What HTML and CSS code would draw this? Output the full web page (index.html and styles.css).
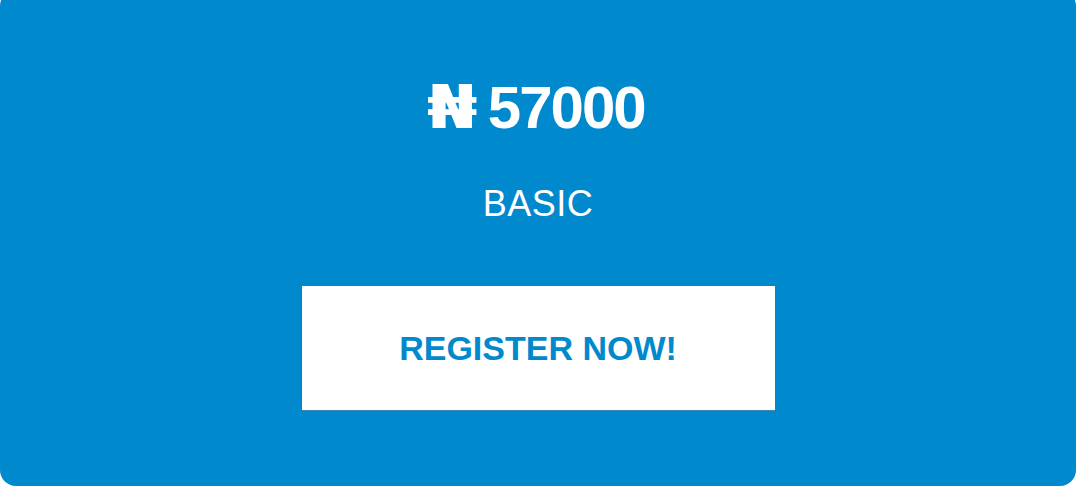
FILE: index.html
```html
<!DOCTYPE html>
<html>
<head>
<meta charset="utf-8">
<link rel="stylesheet" href="styles.css">
</head>
<body>
<div class="card">
  <div class="price"><span class="naira">₦</span> 57000</div>
  <div class="plan">BASIC</div>
  <a class="btn" href="#">REGISTER NOW!</a>
</div>
</body>
</html>
```
FILE: styles.css
```css
html, body {
  margin: 0;
  padding: 0;
  background: #ffffff;
}
body {
  width: 1080px;
  height: 488px;
  overflow: hidden;
  font-family: "Liberation Sans", Arial, sans-serif;
}
.card {
  width: 1076px;
  height: 496px;
  margin-top: -10px;
  background: #0189cd;
  border-radius: 16px;
  display: flex;
  flex-direction: column;
  align-items: center;
  box-sizing: border-box;
  padding-top: 82px;
  color: #ffffff;
}
.price {
  font-weight: 700;
  font-size: 60px;
  line-height: 70px;
  letter-spacing: -2px;
  height: 70px;
}
.naira {
  display: inline-block;
  font-family: "DejaVu Sans", sans-serif;
  font-weight: 700;
  font-size: 60px;
  transform: scaleX(1.22);
  margin-right: 2px;
}
.plan {
  margin-top: 42px;
  font-size: 36px;
  line-height: 40px;
  letter-spacing: 0.5px;
}
.btn {
  margin-top: 62px;
  width: 473px;
  height: 124px;
  background: #ffffff;
  color: #0189cd;
  text-decoration: none;
  font-weight: 700;
  font-size: 34px;
  display: flex;
  align-items: center;
  justify-content: center;
  box-shadow: 0 1px 0 #3a86b8;
}
```
